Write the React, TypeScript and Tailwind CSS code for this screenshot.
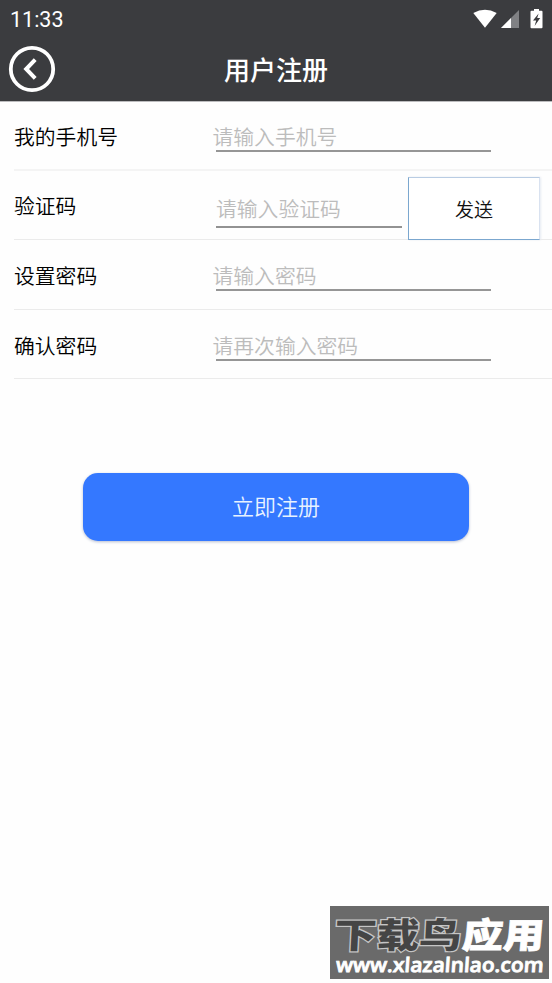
import React from "react";

const rows = [
  { label: "我的手机号", hint: "请输入手机号", height: "h-[69px]", top: "pt-[23px]", gap: "mt-[3px]", line: "border-b-2 border-[#f4f4f4]" },
  { label: "验证码", hint: "请输入验证码", height: "h-[69px]", top: "pt-[23px]", gap: "", line: "border-b border-[#ebebeb]", code: true },
  { label: "设置密码", hint: "请输入密码", height: "h-[70px]", top: "pt-[24px]", gap: "mt-[3px]", line: "border-b border-[#ebebeb]" },
  { label: "确认密码", hint: "请再次输入密码", height: "h-[69px]", top: "pt-[24px]", gap: "mt-[3px]", line: "border-b border-[#ebebeb]" },
];

function StatusBar() {
  return (
    <div className="flex h-[37px] items-center justify-between pl-[10px] pr-[9px]">
      <span className="pt-0.5 font-['Roboto',sans-serif] text-[21.5px] leading-none text-white">11:33</span>
      <div className="flex items-center">
        <svg className="h-[20px] w-[24px]" viewBox="0 0 24 20" fill="#fff">
          <path d="M.3 4Q12 -2.6 23.7 4L12 18.8Z" />
        </svg>
        <svg className="ml-[4px] h-[20px] w-[18px]" viewBox="0 0 18 20">
          <path d="M18 1V19H0Z" fill="#808184" />
          <path d="M10 9V19H0Z" fill="#fff" />
        </svg>
        <svg className="ml-[11px] h-[20px] w-[13px]" viewBox="0 0 13 20">
          <path d="M4 0H9V1.7H11.5Q12.5 1.7 12.5 2.7V18.3Q12.5 19.3 11.5 19.3H1.5Q.5 19.3 .5 18.3V2.7Q.5 1.7 1.5 1.7H4Z" fill="#fff" />
          <path d="M8.6 4.5L3 11.5H6.2L4.6 17L10.2 9H7.2Z" fill="#3b3c3f" />
        </svg>
      </div>
    </div>
  );
}

export default function App() {
  return (
    <div className="flex h-[983px] w-[552px] flex-col overflow-hidden bg-[#fefefe] font-['Noto_Sans_CJK_SC',sans-serif]">
      <header className="h-[102px] border-b border-[#bcbcbe] bg-[#3b3c3f]">
        <StatusBar />
        <div className="grid h-[64px] grid-cols-[1fr_auto_1fr] items-center px-[8px]">
          <button className="h-[48px] w-[48px]">
            <svg viewBox="0 0 48 48" fill="none" stroke="#fff">
              <circle cx="24" cy="24" r="21.2" strokeWidth="3.8" />
              <path d="M27.2 14.7L18.2 24L27.2 33.3" strokeWidth="4" />
            </svg>
          </button>
          <h1 className="text-[26px] leading-none font-medium text-white">用户注册</h1>
        </div>
      </header>

      <main>
        {rows.map((row) => (
          <div key={row.label} className={`ml-[14px] flex ${row.height} ${row.line}`}>
            <label className={`w-[198.5px] shrink-0 text-[20.8px] leading-[22px] font-[350] text-black ${row.top}`}>
              {row.label}
            </label>
            {row.code ? (
              <div className="flex">
                <div className="mt-[26px] ml-[3.5px] h-[31px] w-[186px] border-b-2 border-[#929292] text-[20.8px] leading-[22px] font-[350] text-[#bcbcbc]">
                  {row.hint}
                </div>
                <button className="mt-[6px] ml-[6px] h-[63px] w-[132px] border border-t-[#b9cce3] border-r-[#d9e2f0] border-b-[#7ba7cf] border-l-[#7ba7cf] bg-white text-[19px] leading-none font-[350] text-[#111] shadow-[1px_0_2px_#e7ebf2]">
                  发送
                </button>
              </div>
            ) : (
              <div className={`flex flex-col text-[20.8px] leading-[22px] font-[350] text-[#bcbcbc] ${row.top}`}>
                {row.hint}
                <span className={`ml-[3.5px] h-[2px] w-[275px] bg-[#969696] ${row.gap}`} />
              </div>
            )}
          </div>
        ))}
        <button className="mt-[94px] ml-[83px] flex h-[68px] w-[386px] items-center justify-center rounded-[15px] bg-[#3478ff] pb-[3px] text-[22px] font-[350] text-[#e8f2ff] shadow-[0_1px_3px_#b6bdd0]">
          立即注册
        </button>
      </main>

      <footer className="mt-auto mr-[3px] mb-[4px] h-[73px] w-[219px] self-end bg-[#6a6a6a]">
        <svg className="h-[73px] w-[219px]" viewBox="0 0 219 73">
          <g className="font-['Noto_Sans_CJK_SC',sans-serif] font-black" fontSize="35">
            <text x="4" y="42" textLength="127" lengthAdjust="spacingAndGlyphs" fill="#454545" stroke="#c5c5c5" strokeWidth="2.4" paintOrder="stroke" transform="skewX(-3) translate(2 0)">
              下载鸟
            </text>
            <text x="132" y="42" textLength="82" lengthAdjust="spacingAndGlyphs" fill="#fff" stroke="#fff" strokeWidth=".7" transform="skewX(-5) translate(3 0)">
              应用
            </text>
          </g>
          <text className="font-['Open_Sans',sans-serif] font-semibold" x="6" y="66" fontSize="20" textLength="208" lengthAdjust="spacingAndGlyphs" fill="#fff" stroke="#fff" strokeWidth=".8" transform="skewX(-4) translate(4 0)">
            www.xlazalnlao.com
          </text>
        </svg>
      </footer>
    </div>
  );
}
